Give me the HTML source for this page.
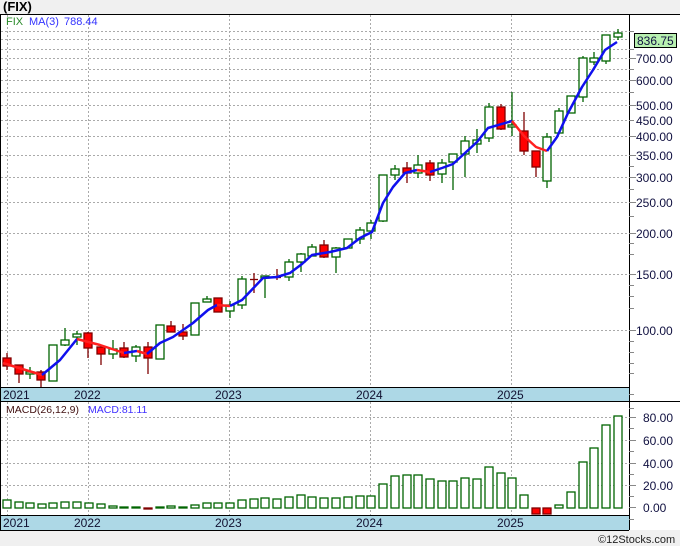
<!DOCTYPE html>
<html><head><meta charset="utf-8"><style>
html,body{margin:0;padding:0;background:#f0f0f0;}
svg{display:block;font-family:"Liberation Sans",sans-serif;}
</style></head><body>
<svg width="680" height="546" viewBox="0 0 680 546" xmlns="http://www.w3.org/2000/svg">
<rect x="0" y="0" width="680" height="546" fill="#f0f0f0"/>
<rect x="0" y="14" width="680" height="516" fill="#fff"/>
<text x="3" y="11" font-size="13" font-weight="bold" fill="#000">(FIX)</text>
<line x1="0" y1="14.5" x2="680" y2="14.5" stroke="#000"/>
<line x1="0.5" y1="14" x2="0.5" y2="530" stroke="#000"/>
<line x1="629.5" y1="14" x2="629.5" y2="530" stroke="#000"/>
<!-- grids main -->
<g stroke="#aaa" stroke-dasharray="2,2" stroke-width="1">
<line x1="1" y1="31.5" x2="629" y2="31.5"/><line x1="1" y1="39.5" x2="629" y2="39.5"/><line x1="1" y1="49.5" x2="629" y2="49.5"/><line x1="1" y1="58.5" x2="629" y2="58.5"/><line x1="1" y1="69.5" x2="629" y2="69.5"/><line x1="1" y1="80.5" x2="629" y2="80.5"/><line x1="1" y1="92.5" x2="629" y2="92.5"/><line x1="1" y1="105.5" x2="629" y2="105.5"/><line x1="1" y1="120.5" x2="629" y2="120.5"/><line x1="1" y1="136.5" x2="629" y2="136.5"/><line x1="1" y1="155.5" x2="629" y2="155.5"/><line x1="1" y1="177.5" x2="629" y2="177.5"/><line x1="1" y1="202.5" x2="629" y2="202.5"/><line x1="1" y1="233.5" x2="629" y2="233.5"/><line x1="1" y1="274.5" x2="629" y2="274.5"/><line x1="1" y1="330.5" x2="629" y2="330.5"/>
<line x1="7.5" y1="15" x2="7.5" y2="387"/><line x1="88.5" y1="15" x2="88.5" y2="387"/><line x1="229.5" y1="15" x2="229.5" y2="387"/><line x1="370.5" y1="15" x2="370.5" y2="387"/><line x1="511.5" y1="15" x2="511.5" y2="387"/>
<line x1="1" y1="417.5" x2="629" y2="417.5"/><line x1="1" y1="440.5" x2="629" y2="440.5"/><line x1="1" y1="463.5" x2="629" y2="463.5"/><line x1="1" y1="485.5" x2="629" y2="485.5"/>
<line x1="7.5" y1="402" x2="7.5" y2="515"/><line x1="88.5" y1="402" x2="88.5" y2="515"/><line x1="229.5" y1="402" x2="229.5" y2="515"/><line x1="370.5" y1="402" x2="370.5" y2="515"/><line x1="511.5" y1="402" x2="511.5" y2="515"/>
</g>
<text x="6" y="25" font-size="11" fill="#2a8a2a">FIX</text>
<text x="29" y="25" font-size="11" fill="#3333ff">MA(3)</text>
<text x="64" y="25" font-size="11" fill="#3333ff">788.44</text>
<!-- candles -->
<g stroke-width="1.3">
<g stroke="#800000" fill="#ff0000">
<line x1="7" y1="353" x2="7" y2="370"/><rect x="3" y="358" width="8" height="8"/>
<line x1="19" y1="365" x2="19" y2="383"/><rect x="15" y="365" width="8" height="9"/>
<line x1="41" y1="370" x2="41" y2="387"/><rect x="37" y="372" width="8" height="8"/>
<line x1="88" y1="332" x2="88" y2="358"/><rect x="84" y="333" width="8" height="15"/>
<line x1="101" y1="347" x2="101" y2="365"/><rect x="97" y="347" width="8" height="7"/>
<line x1="124" y1="342" x2="124" y2="358"/><rect x="120" y="348" width="8" height="9"/>
<line x1="148" y1="342" x2="148" y2="374"/><rect x="144" y="347" width="8" height="11"/>
<line x1="171" y1="321" x2="171" y2="332"/><rect x="167" y="326" width="8" height="6"/>
<line x1="183" y1="324" x2="183" y2="340"/><rect x="179" y="332" width="8" height="4"/>
<line x1="218" y1="298" x2="218" y2="312"/><rect x="214" y="298" width="8" height="14"/>
<line x1="254" y1="273" x2="254" y2="293"/><line x1="250" y1="279.5" x2="258" y2="279.5"/>
<line x1="277" y1="269" x2="277" y2="280"/><line x1="273" y1="277.5" x2="281" y2="277.5"/>
<line x1="324" y1="240" x2="324" y2="258"/><rect x="320" y="245" width="8" height="12"/>
<line x1="407" y1="162" x2="407" y2="183"/><rect x="403" y="168" width="8" height="5"/>
<line x1="430" y1="160" x2="430" y2="181"/><rect x="426" y="163" width="8" height="12"/>
<line x1="501" y1="104" x2="501" y2="130"/><rect x="497" y="107" width="8" height="22"/>
<line x1="524" y1="112" x2="524" y2="155"/><rect x="520" y="131" width="8" height="20"/>
<line x1="536" y1="151" x2="536" y2="177"/><rect x="532" y="151" width="8" height="16"/>
</g>
<g stroke="#006400" fill="#fff">
<line x1="30" y1="367" x2="30" y2="379"/><rect x="26" y="372" width="8" height="2"/>
<line x1="53" y1="345" x2="53" y2="381"/><rect x="49" y="345" width="8" height="36"/>
<line x1="65" y1="328" x2="65" y2="346"/><rect x="61" y="340" width="8" height="5"/>
<line x1="77" y1="331" x2="77" y2="345"/><rect x="73" y="334" width="8" height="3"/>
<line x1="113" y1="340" x2="113" y2="359"/><rect x="109" y="349" width="8" height="5"/>
<line x1="136" y1="345" x2="136" y2="362"/><rect x="132" y="347" width="8" height="9"/>
<line x1="160" y1="325" x2="160" y2="359"/><rect x="156" y="325" width="8" height="34"/>
<line x1="195" y1="303" x2="195" y2="335"/><rect x="191" y="303" width="8" height="32"/>
<line x1="207" y1="296" x2="207" y2="302"/><rect x="203" y="299" width="8" height="3"/>
<line x1="230" y1="301" x2="230" y2="318"/><rect x="226" y="305" width="8" height="6"/>
<line x1="242" y1="276" x2="242" y2="309"/><rect x="238" y="279" width="8" height="26"/>
<line x1="265" y1="276" x2="265" y2="298"/><rect x="261" y="276" width="8" height="2"/>
<line x1="289" y1="259" x2="289" y2="281"/><rect x="285" y="262" width="8" height="15"/>
<line x1="301" y1="253" x2="301" y2="272"/><rect x="297" y="254" width="8" height="8"/>
<line x1="312" y1="244" x2="312" y2="256"/><rect x="308" y="247" width="8" height="9"/>
<line x1="336" y1="247" x2="336" y2="273"/><rect x="332" y="248" width="8" height="9"/>
<line x1="348" y1="239" x2="348" y2="248"/><rect x="344" y="239" width="8" height="9"/>
<line x1="360" y1="227" x2="360" y2="244"/><rect x="356" y="230" width="8" height="9"/>
<line x1="371" y1="220" x2="371" y2="239"/><rect x="367" y="223" width="8" height="8"/>
<line x1="383" y1="175" x2="383" y2="222"/><rect x="379" y="175" width="8" height="46"/>
<line x1="395" y1="165" x2="395" y2="180"/><rect x="391" y="169" width="8" height="6"/>
<line x1="418" y1="155" x2="418" y2="178"/><rect x="414" y="165" width="8" height="8"/>
<line x1="442" y1="159" x2="442" y2="183"/><rect x="438" y="163" width="8" height="11"/>
<line x1="453" y1="154" x2="453" y2="190"/><rect x="449" y="154" width="8" height="8"/>
<line x1="465" y1="136" x2="465" y2="177"/><rect x="461" y="141" width="8" height="13"/>
<line x1="477" y1="129" x2="477" y2="153"/><rect x="473" y="140" width="8" height="4"/>
<line x1="489" y1="103" x2="489" y2="142"/><rect x="485" y="107" width="8" height="31"/>
<line x1="512" y1="92" x2="512" y2="136"/><rect x="508" y="125" width="8" height="2"/>
<line x1="547" y1="133" x2="547" y2="188"/><rect x="543" y="137" width="8" height="44"/>
<line x1="559" y1="108" x2="559" y2="133"/><rect x="555" y="111" width="8" height="22"/>
<line x1="571" y1="96" x2="571" y2="113"/><rect x="567" y="96" width="8" height="17"/>
<line x1="583" y1="56" x2="583" y2="102"/><rect x="579" y="58" width="8" height="39"/>
<line x1="594" y1="52" x2="594" y2="65"/><rect x="590" y="58" width="8" height="4"/>
<line x1="606" y1="35" x2="606" y2="64"/><rect x="602" y="35" width="8" height="26"/>
<line x1="618" y1="29" x2="618" y2="40"/><rect x="614" y="33" width="8" height="4"/>
</g>
</g>
<!-- MA -->
<g fill="none" stroke-width="2.5" stroke-linejoin="round">
<polyline stroke="#ff2020" points="3,363 19,368 42,375"/>
<polyline stroke="#1010ee" points="42,375 60,360 77,339"/>
<polyline stroke="#ff2020" points="77,339 100,345 124,353"/>
<polyline stroke="#1010ee" points="124,353 137,351"/>
<polyline stroke="#ff2020" points="137,351 147,354"/>
<polyline stroke="#1010ee" points="147,354 160,343 173,337 193,323 208,310 217,305"/>
<polyline stroke="#ff2020" points="217,305 230,306"/>
<polyline stroke="#1010ee" points="230,306 242,300 263,278 277,277 290,273 302,264 312,255 330,252 347,248 360,238 372,232 383,203 393,187 405,173 417,170"/>
<polyline stroke="#ff2020" points="417,170 430,172"/>
<polyline stroke="#1010ee" points="430,172 442,168 453,164 465,153 477,142 488,128 512,121"/>
<polyline stroke="#ff2020" points="512,121 524,136 536,147 547,151"/>
<polyline stroke="#1010ee" points="547,151 557,137 568,113 582,87 593,70 605,50 617,42"/>
</g>
<!-- right axis main -->
<g stroke="#888"><line x1="629" y1="31.5" x2="634" y2="31.5"/><line x1="629" y1="49.5" x2="634" y2="49.5"/><line x1="629" y1="69.5" x2="634" y2="69.5"/><line x1="629" y1="92.5" x2="634" y2="92.5"/><line x1="629" y1="120.5" x2="634" y2="120.5"/><line x1="629" y1="166.5" x2="634" y2="166.5"/><line x1="629" y1="189.5" x2="634" y2="189.5"/><line x1="629" y1="216.5" x2="634" y2="216.5"/><line x1="629" y1="243.5" x2="634" y2="243.5"/><line x1="629" y1="254.5" x2="634" y2="254.5"/><line x1="629" y1="285.5" x2="634" y2="285.5"/><line x1="629" y1="296.5" x2="634" y2="296.5"/><line x1="629" y1="308.5" x2="634" y2="308.5"/><line x1="629" y1="341.5" x2="634" y2="341.5"/><line x1="629" y1="352.5" x2="634" y2="352.5"/><line x1="629" y1="363.5" x2="634" y2="363.5"/><line x1="629" y1="373.5" x2="634" y2="373.5"/>
<line x1="629" y1="58.5" x2="636" y2="58.5"/><line x1="629" y1="80.5" x2="636" y2="80.5"/><line x1="629" y1="105.5" x2="636" y2="105.5"/><line x1="629" y1="136.5" x2="636" y2="136.5"/><line x1="629" y1="155.5" x2="636" y2="155.5"/><line x1="629" y1="177.5" x2="636" y2="177.5"/><line x1="629" y1="202.5" x2="636" y2="202.5"/><line x1="629" y1="233.5" x2="636" y2="233.5"/><line x1="629" y1="274.5" x2="636" y2="274.5"/><line x1="629" y1="330.5" x2="636" y2="330.5"/>
<line x1="629" y1="394.5" x2="634" y2="394.5"/><line x1="629" y1="408.5" x2="634" y2="408.5"/><line x1="629" y1="428.5" x2="634" y2="428.5"/><line x1="629" y1="451.5" x2="634" y2="451.5"/><line x1="629" y1="474.5" x2="634" y2="474.5"/><line x1="629" y1="496.5" x2="634" y2="496.5"/><line x1="629" y1="519.5" x2="634" y2="519.5"/>
<line x1="629" y1="417.5" x2="636" y2="417.5"/><line x1="629" y1="440.5" x2="636" y2="440.5"/><line x1="629" y1="463.5" x2="636" y2="463.5"/><line x1="629" y1="485.5" x2="636" y2="485.5"/><line x1="629" y1="507.5" x2="636" y2="507.5"/>
</g>
<g font-size="12" fill="#101040">
<text x="636" y="63">700.00</text><text x="636" y="85">600.00</text><text x="636" y="110">500.00</text><text x="636" y="125">450.00</text><text x="636" y="141">400.00</text><text x="636" y="160">350.00</text><text x="636" y="182">300.00</text><text x="636" y="207">250.00</text><text x="636" y="238">200.00</text><text x="636" y="279">150.00</text><text x="636" y="335">100.00</text>
<text x="643" y="422">80.00</text><text x="643" y="445">60.00</text><text x="643" y="468">40.00</text><text x="643" y="490">20.00</text><text x="643" y="512">0.00</text>
</g>
<rect x="634.5" y="33.5" width="42" height="14" fill="#b8f0b0" stroke="#000"/>
<text x="637" y="45" font-size="12" fill="#101040">836.75</text>
<!-- date bands -->
<rect x="1" y="387" width="628" height="14" fill="#add8e6"/>
<line x1="0" y1="387.5" x2="629" y2="387.5" stroke="#000"/>
<line x1="0" y1="401.5" x2="680" y2="401.5" stroke="#000"/>
<rect x="1" y="515" width="628" height="15" fill="#add8e6"/>
<line x1="0" y1="515.5" x2="629" y2="515.5" stroke="#000"/>
<line x1="0" y1="530.5" x2="629" y2="530.5" stroke="#000"/>
<g font-size="12" fill="#101030">
<text x="3" y="399">2021</text><text x="74" y="399">2022</text><text x="215" y="399">2023</text><text x="356" y="399">2024</text><text x="497" y="399">2025</text>
<text x="3" y="527">2021</text><text x="74" y="527">2022</text><text x="215" y="527">2023</text><text x="356" y="527">2024</text><text x="497" y="527">2025</text>
</g>
<text x="6" y="413" font-size="10.5" fill="#401010">MACD(26,12,9)</text>
<text x="88" y="413" font-size="10.5" fill="#4030ff">MACD:81.11</text>
<!-- MACD bars -->
<g stroke="#006400" fill="#fff" stroke-width="1.3">
<rect x="3" y="500" width="8" height="8"/><rect x="15" y="502" width="8" height="6"/><rect x="26" y="503" width="8" height="5"/><rect x="38" y="504" width="8" height="4"/><rect x="49" y="503" width="8" height="5"/><rect x="61" y="502" width="8" height="6"/><rect x="73" y="502" width="8" height="6"/><rect x="85" y="503" width="8" height="5"/><rect x="97" y="504" width="8" height="4"/><rect x="109" y="506" width="8" height="2"/>
<rect x="120" y="507" width="8" height="1"/><rect x="132" y="507" width="8" height="1"/><rect x="156" y="507" width="8" height="1"/><rect x="167" y="506" width="8" height="2"/><rect x="179" y="507" width="8" height="1"/>
<rect x="191" y="505" width="8" height="3"/><rect x="203" y="503" width="8" height="5"/><rect x="214" y="503" width="8" height="5"/><rect x="226" y="503" width="8" height="5"/><rect x="238" y="500" width="8" height="8"/><rect x="250" y="499" width="8" height="9"/><rect x="261" y="498" width="8" height="10"/><rect x="273" y="499" width="8" height="9"/><rect x="285" y="497" width="8" height="11"/><rect x="297" y="495" width="8" height="13"/><rect x="308" y="497" width="8" height="11"/><rect x="320" y="498" width="8" height="10"/><rect x="332" y="498" width="8" height="10"/><rect x="344" y="497" width="8" height="11"/><rect x="356" y="496" width="8" height="12"/>
<rect x="367" y="496" width="8" height="12"/><rect x="379" y="484" width="8" height="24"/><rect x="391" y="476" width="8" height="32"/><rect x="403" y="475" width="8" height="33"/><rect x="414" y="475" width="8" height="33"/><rect x="426" y="479" width="8" height="29"/><rect x="438" y="481" width="8" height="27"/><rect x="449" y="481" width="8" height="27"/><rect x="461" y="478" width="8" height="30"/><rect x="473" y="479" width="8" height="29"/><rect x="485" y="467" width="8" height="41"/><rect x="497" y="473" width="8" height="35"/><rect x="508" y="478" width="8" height="30"/><rect x="520" y="495" width="8" height="13"/>
<rect x="555" y="505" width="8" height="3"/><rect x="567" y="492" width="8" height="16"/><rect x="579" y="462" width="8" height="46"/><rect x="590" y="448" width="8" height="60"/><rect x="602" y="425" width="8" height="83"/><rect x="614" y="416" width="8" height="92"/>
</g>
<g stroke="#800000" fill="#ff0000" stroke-width="1.3">
<rect x="144" y="508" width="8" height="1"/><rect x="532" y="508" width="8" height="6"/><rect x="543" y="508" width="8" height="6"/>
</g>
<text x="598" y="543" font-size="11" fill="#222">©12Stocks.com</text>
</svg>
</body></html>
